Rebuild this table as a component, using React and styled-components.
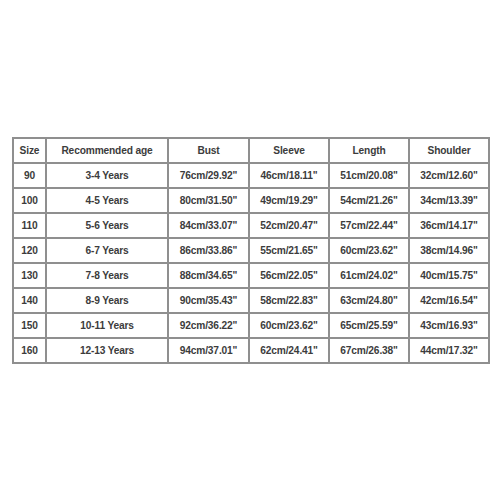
import React from "react";
import styled, { createGlobalStyle } from "styled-components";

const GlobalStyle = createGlobalStyle`
  html, body {
    margin: 0;
    padding: 0;
    background: #ffffff;
  }
`;

const Page = styled.div`
  width: 500px;
  height: 500px;
  box-sizing: border-box;
  padding: 137px 0 0 12px;
  background: #fff;
`;

const Table = styled.table`
  border-collapse: collapse;
  table-layout: fixed;
  width: 476px;
  font-family: "Liberation Sans", Arial, sans-serif;
  font-size: 10.2px;
  letter-spacing: -0.15px;
  font-weight: bold;
  color: #3c3c3c;
`;

const Cell = styled.td`
  border: 2px solid #8f8f8f;
  height: 23px;
  padding: 0;
  text-align: center;
  vertical-align: middle;
  white-space: nowrap;
`;

const HeadCell = styled(Cell).attrs({ as: "th" })`
  font-weight: bold;
`;

const columns = [
  { label: "Size", width: 33 },
  { label: "Recommended age", width: 122 },
  { label: "Bust", width: 81 },
  { label: "Sleeve", width: 80 },
  { label: "Length", width: 80 },
  { label: "Shoulder", width: 80 },
];

const rows = [
  ["90", "3-4 Years", "76cm/29.92\"", "46cm/18.11\"", "51cm/20.08\"", "32cm/12.60\""],
  ["100", "4-5 Years", "80cm/31.50\"", "49cm/19.29\"", "54cm/21.26\"", "34cm/13.39\""],
  ["110", "5-6 Years", "84cm/33.07\"", "52cm/20.47\"", "57cm/22.44\"", "36cm/14.17\""],
  ["120", "6-7 Years", "86cm/33.86\"", "55cm/21.65\"", "60cm/23.62\"", "38cm/14.96\""],
  ["130", "7-8 Years", "88cm/34.65\"", "56cm/22.05\"", "61cm/24.02\"", "40cm/15.75\""],
  ["140", "8-9 Years", "90cm/35.43\"", "58cm/22.83\"", "63cm/24.80\"", "42cm/16.54\""],
  ["150", "10-11 Years", "92cm/36.22\"", "60cm/23.62\"", "65cm/25.59\"", "43cm/16.93\""],
  ["160", "12-13 Years", "94cm/37.01\"", "62cm/24.41\"", "67cm/26.38\"", "44cm/17.32\""],
];

const App = () => {
  return (
    <Page>
      <GlobalStyle />
      <Table>
        <colgroup>
          {columns.map((c) => (
            <col key={c.label} style={{ width: c.width }} />
          ))}
        </colgroup>
        <thead>
          <tr>
            {columns.map((c) => (
              <HeadCell key={c.label}>{c.label}</HeadCell>
            ))}
          </tr>
        </thead>
        <tbody>
          {rows.map((r) => (
            <tr key={r[0]}>
              {r.map((v, i) => (
                <Cell key={i}>{v}</Cell>
              ))}
            </tr>
          ))}
        </tbody>
      </Table>
    </Page>
  );
};

export default App;
